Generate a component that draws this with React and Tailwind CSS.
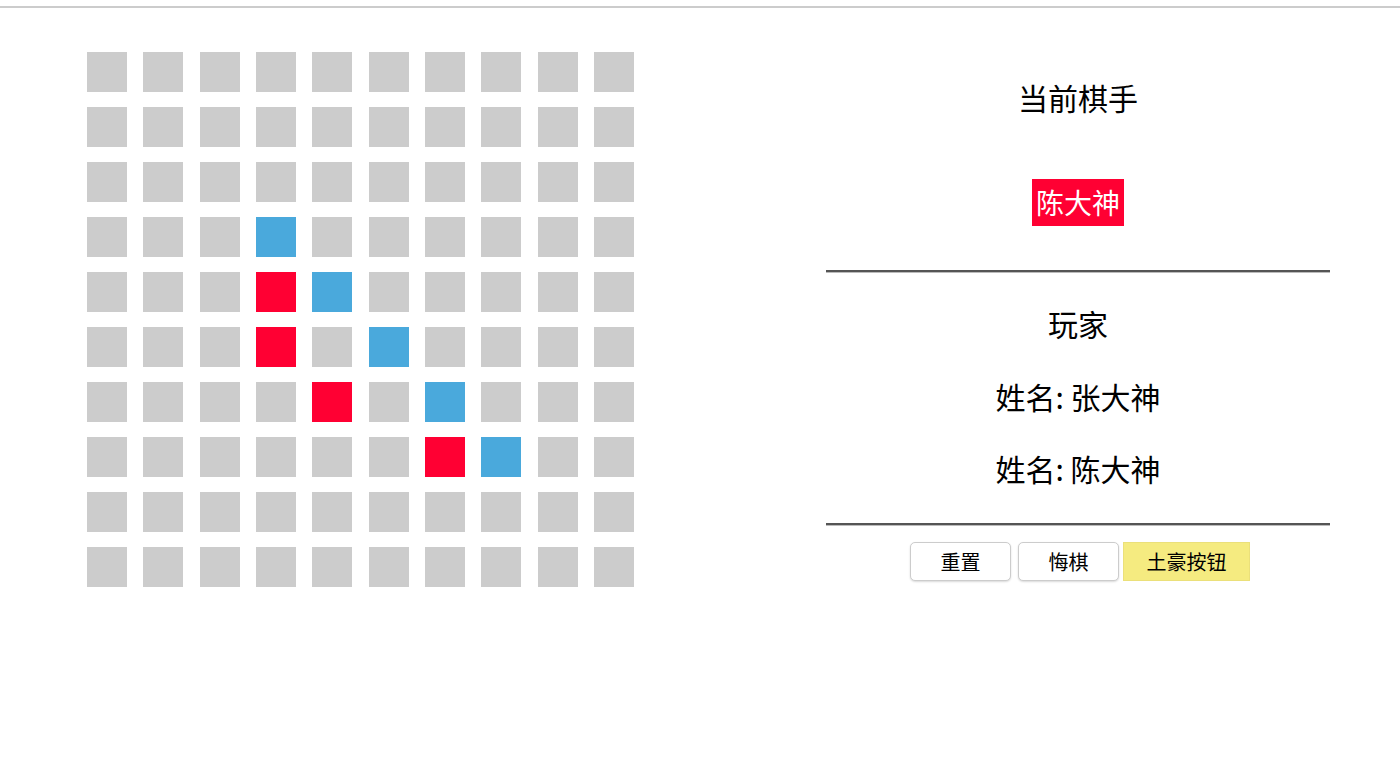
import React from 'react';

const pieces = {
  '3-3': 'blue',
  '4-3': 'red',
  '4-4': 'blue',
  '5-3': 'red',
  '5-5': 'blue',
  '6-4': 'red',
  '6-6': 'blue',
  '7-6': 'red',
  '7-7': 'blue',
};

const cellColor = (r, c) => {
  const p = pieces[`${r}-${c}`];
  if (p === 'red') return 'bg-[#ff0033]';
  if (p === 'blue') return 'bg-[#4aa9dc]';
  return 'bg-[#cccccc]';
};

const Board = () => {
  const rows = Array.from({ length: 10 }, (_, i) => i);
  return (
    <div className="grid grid-cols-[repeat(10,40px)] grid-rows-[repeat(10,40px)] gap-x-[16.33px] gap-y-[15px]">
      {rows.map((r) =>
        rows.map((c) => <div key={`${r}-${c}`} className={`w-[40px] h-[40px] ${cellColor(r, c)}`} />)
      )}
    </div>
  );
};

const Divider = () => <div className="w-full h-[3px] border-t-2 border-[#555555] border-b border-b-[#bbbbbb]" />;

const App = () => {
  return (
    <div
      className="min-h-[766px] bg-white text-black"
      style={{ fontFamily: '"Noto Sans CJK SC", "Noto Sans", sans-serif' }}
    >
      <div className="mt-[6px] h-[2px] bg-[#cccccc]" />
      <div className="flex items-start pl-[87px] pt-[44px]">
        <Board />
        <div className="ml-[192px] w-[504px] flex flex-col items-center">
          <div className="mt-[25px] h-[40px] leading-[40px] text-[30px]">当前棋手</div>
          <div className="mt-[62px] h-[47px] leading-[46px] px-[4px] bg-[#ff0033] text-white text-[28px]">陈大神</div>
          <div className="mt-[44px] w-full">
            <Divider />
          </div>
          <div className="mt-[30px] h-[40px] leading-[40px] text-[30px]">玩家</div>
          <div className="mt-[33px] h-[40px] leading-[40px] text-[30px]">姓名: 张大神</div>
          <div className="mt-[32px] h-[40px] leading-[40px] text-[30px]">姓名: 陈大神</div>
          <div className="mt-[35px] w-full">
            <Divider />
          </div>
          <div className="mt-[16px] ml-[4px] flex items-center">
            <button className="w-[101px] h-[39px] rounded-[5px] border border-[#cccccc] bg-white text-[20px] shadow-[0_1px_2px_rgba(0,0,0,0.15)]">
              重置
            </button>
            <button className="ml-[7px] w-[101px] h-[39px] rounded-[5px] border border-[#cccccc] bg-white text-[20px] shadow-[0_1px_2px_rgba(0,0,0,0.15)]">
              悔棋
            </button>
            <button className="ml-[4px] w-[127px] h-[39px] bg-[#f5eb80] border border-[#ebe07a] text-[20px]">
              土豪按钮
            </button>
          </div>
        </div>
      </div>
    </div>
  );
};

export default App;
